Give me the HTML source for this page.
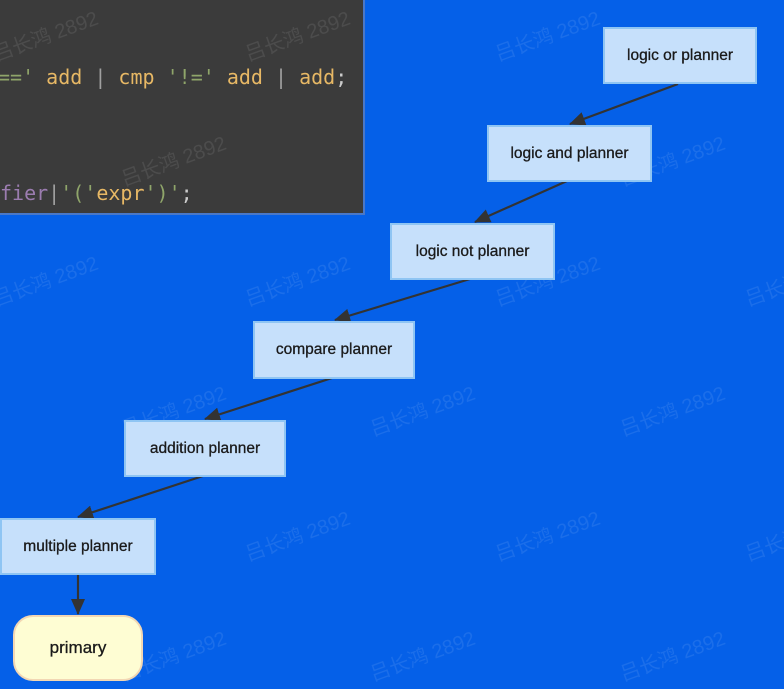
<!DOCTYPE html>
<html><head><meta charset="utf-8"><style>
body{margin:0;width:784px;height:689px;overflow:hidden;background:#0560e8;position:relative;font-family:"Liberation Sans",sans-serif}
.code{position:absolute;left:0;top:0;width:363px;height:213px;background:#3b3b3b;border-right:2px solid #4a78c8;border-bottom:2px solid #4a78c8;overflow:hidden}
.ln{position:absolute;left:0;font-family:"DejaVu Sans Mono","Liberation Mono",monospace;font-size:20px;white-space:pre;color:#e7b865}
.g{color:#8fa56a}.p{color:#a0a0a0}.v{color:#9b7cb0}
.box{position:absolute;background:#c6e0fb;border:2px solid #8fc5f3;box-sizing:border-box;display:flex;align-items:center;justify-content:center;font-size:15.5px;color:#1a1a1a;-webkit-text-stroke:0.3px #1a1a1a}
.prim{position:absolute;left:13px;top:615px;width:130px;height:66px;background:#fefdd3;border:2px solid #f2d7b3;border-radius:20px;box-sizing:border-box;display:flex;align-items:center;justify-content:center;font-size:17px;color:#1a1a1a;-webkit-text-stroke:0.3px #1a1a1a}
.wm{position:absolute;color:rgba(255,255,255,0.09);font-size:20px;transform:rotate(-20deg);white-space:nowrap;font-family:"Liberation Sans","Noto Sans CJK SC",sans-serif}
</style></head><body>
<div class="code">
<div class="ln" style="top:65px;left:-2px"><span class="g">=='</span> add <span class="p">|</span> cmp <span class="g">'!='</span> add <span class="p">|</span> add<span style="color:#ccc">;</span></div>
<div class="ln" style="top:181px;left:0"><span class="v">fier</span><span class="p">|</span><span class="g">'('</span>expr<span class="g">')'</span><span style="color:#ccc">;</span></div>
</div>
<div class="wm" style="left:-10px;top:20px">吕长鸿 2892</div>
<div class="wm" style="left:242px;top:20px">吕长鸿 2892</div>
<div class="wm" style="left:118px;top:145px">吕长鸿 2892</div>
<div class="wm" style="left:492px;top:20px">吕长鸿 2892</div>
<div class="wm" style="left:-10px;top:265px">吕长鸿 2892</div>
<div class="wm" style="left:242px;top:265px">吕长鸿 2892</div>
<div class="wm" style="left:492px;top:265px">吕长鸿 2892</div>
<div class="wm" style="left:617px;top:145px">吕长鸿 2892</div>
<div class="wm" style="left:742px;top:265px">吕长鸿 2892</div>
<div class="wm" style="left:118px;top:395px">吕长鸿 2892</div>
<div class="wm" style="left:367px;top:395px">吕长鸿 2892</div>
<div class="wm" style="left:617px;top:395px">吕长鸿 2892</div>
<div class="wm" style="left:242px;top:520px">吕长鸿 2892</div>
<div class="wm" style="left:492px;top:520px">吕长鸿 2892</div>
<div class="wm" style="left:742px;top:520px">吕长鸿 2892</div>
<div class="wm" style="left:118px;top:640px">吕长鸿 2892</div>
<div class="wm" style="left:367px;top:640px">吕长鸿 2892</div>
<div class="wm" style="left:617px;top:640px">吕长鸿 2892</div>
<svg style="position:absolute;left:0;top:0" width="784" height="689">
<defs><marker id="a" markerWidth="16" markerHeight="14" refX="15" refY="7" orient="auto" markerUnits="userSpaceOnUse"><path d="M0,0 L16,7 L0,14 z" fill="#333"/></marker></defs>
<g stroke="#333" stroke-width="2.2" marker-end="url(#a)">
<line x1="678" y1="84" x2="570" y2="124"/>
<line x1="567" y1="181" x2="475" y2="222"/>
<line x1="470" y1="279" x2="335" y2="320"/>
<line x1="332" y1="378" x2="205" y2="419"/>
<line x1="203" y1="476" x2="78" y2="517"/>
<line x1="78" y1="574" x2="78" y2="614"/>
</g></svg>
<div class="box" style="left:603px;top:27px;width:154px;height:57px">logic or planner</div>
<div class="box" style="left:487px;top:125px;width:165px;height:57px">logic and planner</div>
<div class="box" style="left:390px;top:223px;width:165px;height:57px">logic not planner</div>
<div class="box" style="left:253px;top:321px;width:162px;height:58px">compare planner</div>
<div class="box" style="left:124px;top:420px;width:162px;height:57px">addition planner</div>
<div class="box" style="left:0;top:518px;width:156px;height:57px">multiple planner</div>
<div class="prim">primary</div>
</body></html>
